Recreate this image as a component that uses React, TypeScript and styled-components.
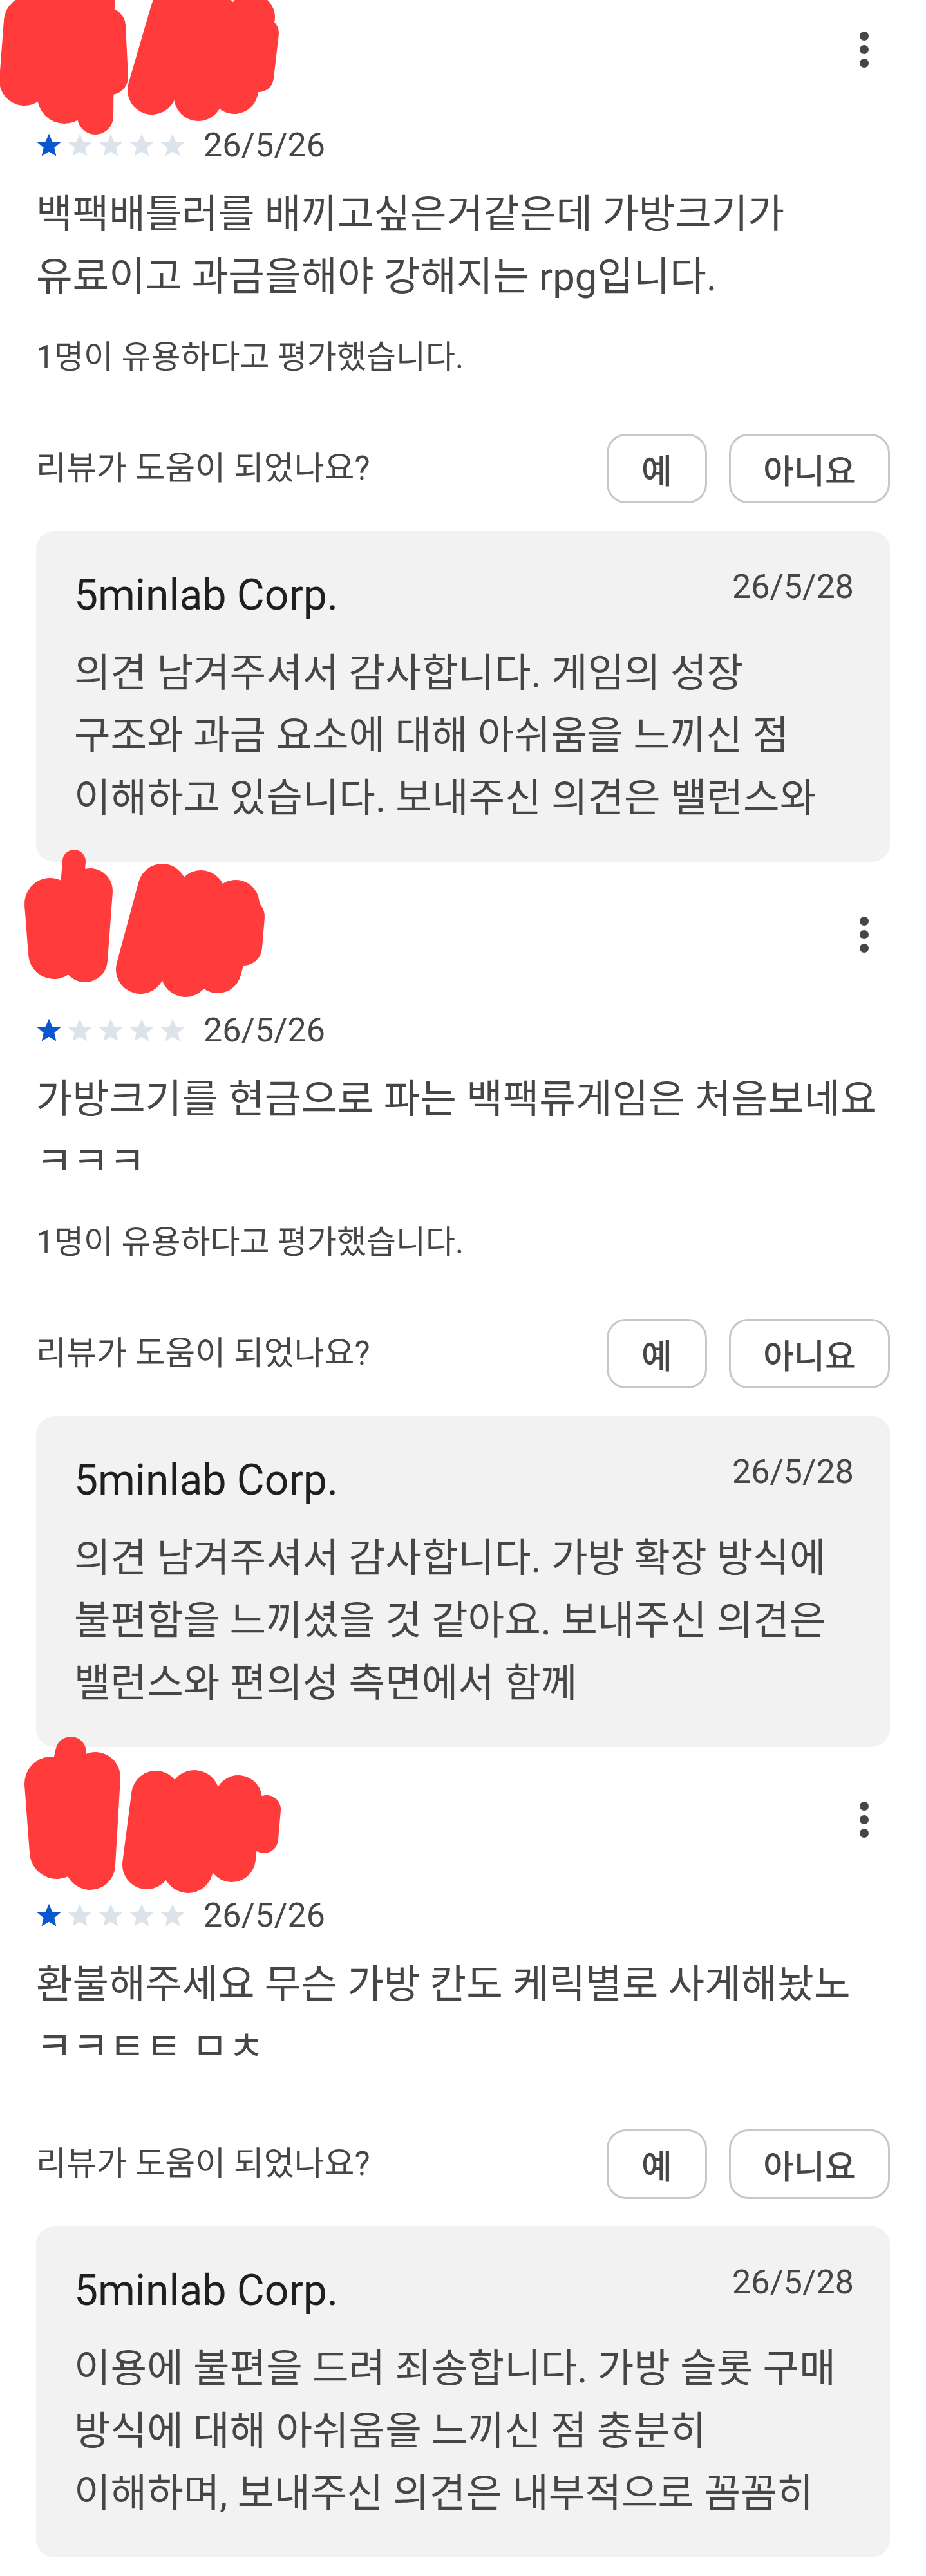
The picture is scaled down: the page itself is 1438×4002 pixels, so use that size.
import React from "react";
import styled, { createGlobalStyle } from "styled-components";

const GlobalStyle = createGlobalStyle`
  html, body {
    margin: 0;
    padding: 0;
    background: #ffffff;
  }
  body {
    font-family: Roboto, "Noto Sans CJK KR", "Noto Sans", sans-serif;
    color: #444746;
    -webkit-font-smoothing: antialiased;
  }
  * { box-sizing: border-box; }
`;

const Page = styled.div`
  width: 1438px;
  padding: 21px 56px 25px;
  display: flex;
  flex-direction: column;
  gap: 57px;
`;

const Review = styled.section`
  display: flex;
  flex-direction: column;
`;

const Header = styled.header`
  position: relative;
  height: 112px;
  display: flex;
  align-items: center;
  justify-content: space-between;
`;

const Avatar = styled.div<{ $color: string }>`
  width: 112px;
  height: 112px;
  border-radius: 50%;
  background: ${(p) => p.$color};
`;

const Scribble = styled.svg`
  position: absolute;
  left: -56px;
  top: 0;
  overflow: visible;
  pointer-events: none;
`;

const MoreButton = styled.button`
  width: 84px;
  height: 84px;
  margin-right: -2px;
  padding: 0;
  border: none;
  background: transparent;
  display: flex;
  align-items: center;
  justify-content: center;
`;

const MetaRow = styled.div`
  margin-top: 63px;
  height: 60px;
  display: flex;
  align-items: center;
`;

const Stars = styled.div`
  display: flex;
  gap: 4px;
  margin-left: -2px;
`;

const DateText = styled.span`
  margin-left: 26px;
  font-size: 52px;
  line-height: 60px;
  color: #444746;
`;

const Body = styled.p`
  margin: 29px 0 0;
  font-size: 61.5px;
  line-height: 97px;
  color: #444746;
`;

const Line = styled.span`
  display: block;
  white-space: nowrap;
`;

const HelpfulCount = styled.p`
  margin: 46px 0 10px;
  font-size: 50px;
  line-height: 60px;
  color: #444746;
`;

const HelpfulRow = styled.div`
  margin-top: 79px;
  height: 108px;
  display: flex;
  align-items: center;
`;

const HelpfulQuestion = styled.span`
  flex: 1;
  font-size: 51px;
  line-height: 60px;
  color: #444746;
`;

const Choices = styled.div`
  display: flex;
  gap: 34px;
`;

const ChoiceButton = styled.button<{ $wide?: boolean }>`
  height: 108px;
  width: ${(p) => (p.$wide ? "250px" : "156px")};
  border: 3.5px solid #c6c8c7;
  border-radius: 30px;
  background: #ffffff;
  font-family: Roboto, "Noto Sans CJK KR", sans-serif;
  font-size: 52px;
  font-weight: 500;
  color: #444746;
  display: flex;
  align-items: center;
  justify-content: center;
  padding: 0;
`;

const ReplyBox = styled.div`
  margin-top: 43px;
  height: 514px;
  background: #f2f2f2;
  border-radius: 28px;
  padding: 60px 56px 0 59px;
  display: flex;
  flex-direction: column;
`;

const ReplyHead = styled.div`
  display: flex;
  align-items: flex-start;
  justify-content: space-between;
`;

const Developer = styled.span`
  font-size: 66px;
  line-height: 80px;
  color: #1f1f1f;
`;

const ReplyDate = styled.span`
  font-size: 52px;
  line-height: 54px;
  color: #444746;
`;

const ReplyText = styled.p`
  margin: 33px 0 0;
  font-size: 61.5px;
  line-height: 97px;
  color: #444746;
`;

type Stroke = [number, number, number, number, number];

const MoreIcon = () => (
  <svg width="84" height="84" viewBox="0 0 84 84">
    <circle cx="42" cy="21" r="7" fill="#444746" />
    <circle cx="42" cy="42" r="7" fill="#444746" />
    <circle cx="42" cy="63" r="7" fill="#444746" />
  </svg>
);

const STAR =
  "M12 17.27L18.18 21l-1.64-7.03L22 9.24l-7.19-.61L12 2 9.19 8.63 2 9.24l5.46 4.73L5.82 21z";

const StarIcon = ({ filled }: { filled: boolean }) => (
  <svg width="44" height="44" viewBox="0 0 24 24">
    <path d={STAR} fill={filled ? "#0b57d0" : "#dde3ea"} />
  </svg>
);

const RedScribble = ({ strokes }: { strokes: Stroke[] }) => (
  <Scribble width="480" height="112" viewBox="0 0 480 112">
    {strokes.map(([x1, y1, x2, y2, w], i) => (
      <line
        key={i}
        x1={x1}
        y1={y1}
        x2={x2}
        y2={y2}
        stroke="#ff3b3b"
        strokeWidth={w}
        strokeLinecap="round"
      />
    ))}
  </Scribble>
);

type ReviewData = {
  avatar: string;
  strokes: Stroke[];
  date: string;
  body: string[];
  helpful?: string;
  replyDate: string;
  reply: string[];
};

const reviews: ReviewData[] = [
  {
    avatar: "#ff3b3b",
    strokes: [
      [45, 12, 38, 104, 78],
      [100, -4, 100, 129, 84],
      [150, -18, 148, 160, 56],
      [168, 19, 172, 99, 54],
      [272, -4, 236, 119, 76],
      [332, 6, 308, 129, 76],
      [390, 6, 364, 119, 74],
      [410, 30, 402, 99, 46],
    ],
    date: "26/5/26",
    body: ["백팩배틀러를 배끼고싶은거같은데 가방크기가", "유료이고 과금을해야 강해지는 rpg입니다."],
    helpful: "1명이 유용하다고 평가했습니다.",
    replyDate: "26/5/28",
    reply: [
      "의견 남겨주셔서 감사합니다. 게임의 성장",
      "구조와 과금 요소에 대해 아쉬움을 느끼신 점",
      "이해하고 있습니다. 보내주신 의견은 밸런스와",
    ],
  },
  {
    avatar: "#4caf50",
    strokes: [
      [115, -58, 110, 5, 36],
      [78, 8, 84, 85, 80],
      [140, -12, 132, 95, 70],
      [252, -16, 218, 110, 76],
      [312, -6, 288, 115, 76],
      [366, 8, 338, 110, 74],
      [382, 28, 378, 75, 58],
    ],
    date: "26/5/26",
    body: ["가방크기를 현금으로 파는 백팩류게임은 처음보네요", "ㅋㅋㅋ"],
    helpful: "1명이 유용하다고 평가했습니다.",
    replyDate: "26/5/28",
    reply: [
      "의견 남겨주셔서 감사합니다. 가방 확장 방식에",
      "불편함을 느끼셨을 것 같아요. 보내주신 의견은",
      "밸런스와 편의성 측면에서 함께",
    ],
  },
  {
    avatar: "#ff3b3b",
    strokes: [
      [110, -49, 96, 16, 48],
      [80, 0, 88, 106, 84],
      [148, -10, 140, 126, 78],
      [242, 18, 228, 126, 76],
      [302, 18, 292, 131, 78],
      [370, 24, 360, 116, 74],
      [414, 40, 410, 86, 44],
    ],
    date: "26/5/26",
    body: ["환불해주세요 무슨 가방 칸도 케릭별로 사게해놨노", "ㅋㅋㅌㅌ ㅁㅊ"],
    replyDate: "26/5/28",
    reply: [
      "이용에 불편을 드려 죄송합니다. 가방 슬롯 구매",
      "방식에 대해 아쉬움을 느끼신 점 충분히",
      "이해하며, 보내주신 의견은 내부적으로 꼼꼼히",
    ],
  },
];

const ReviewCard = ({ data }: { data: ReviewData }) => (
  <Review>
    <Header>
      <Avatar $color={data.avatar} />
      <RedScribble strokes={data.strokes} />
      <MoreButton aria-label="더보기">
        <MoreIcon />
      </MoreButton>
    </Header>
    <MetaRow>
      <Stars>
        {[0, 1, 2, 3, 4].map((i) => (
          <StarIcon key={i} filled={i === 0} />
        ))}
      </Stars>
      <DateText>{data.date}</DateText>
    </MetaRow>
    <Body>
      {data.body.map((l, i) => (
        <Line key={i}>{l}</Line>
      ))}
    </Body>
    {data.helpful && <HelpfulCount>{data.helpful}</HelpfulCount>}
    <HelpfulRow>
      <HelpfulQuestion>리뷰가 도움이 되었나요?</HelpfulQuestion>
      <Choices>
        <ChoiceButton>예</ChoiceButton>
        <ChoiceButton $wide>아니요</ChoiceButton>
      </Choices>
    </HelpfulRow>
    <ReplyBox>
      <ReplyHead>
        <Developer>5minlab Corp.</Developer>
        <ReplyDate>{data.replyDate}</ReplyDate>
      </ReplyHead>
      <ReplyText>
        {data.reply.map((l, i) => (
          <Line key={i}>{l}</Line>
        ))}
      </ReplyText>
    </ReplyBox>
  </Review>
);

export default function App() {
  return (
    <>
      <GlobalStyle />
      <Page>
        {reviews.map((r, i) => (
          <ReviewCard key={i} data={r} />
        ))}
      </Page>
    </>
  );
}
